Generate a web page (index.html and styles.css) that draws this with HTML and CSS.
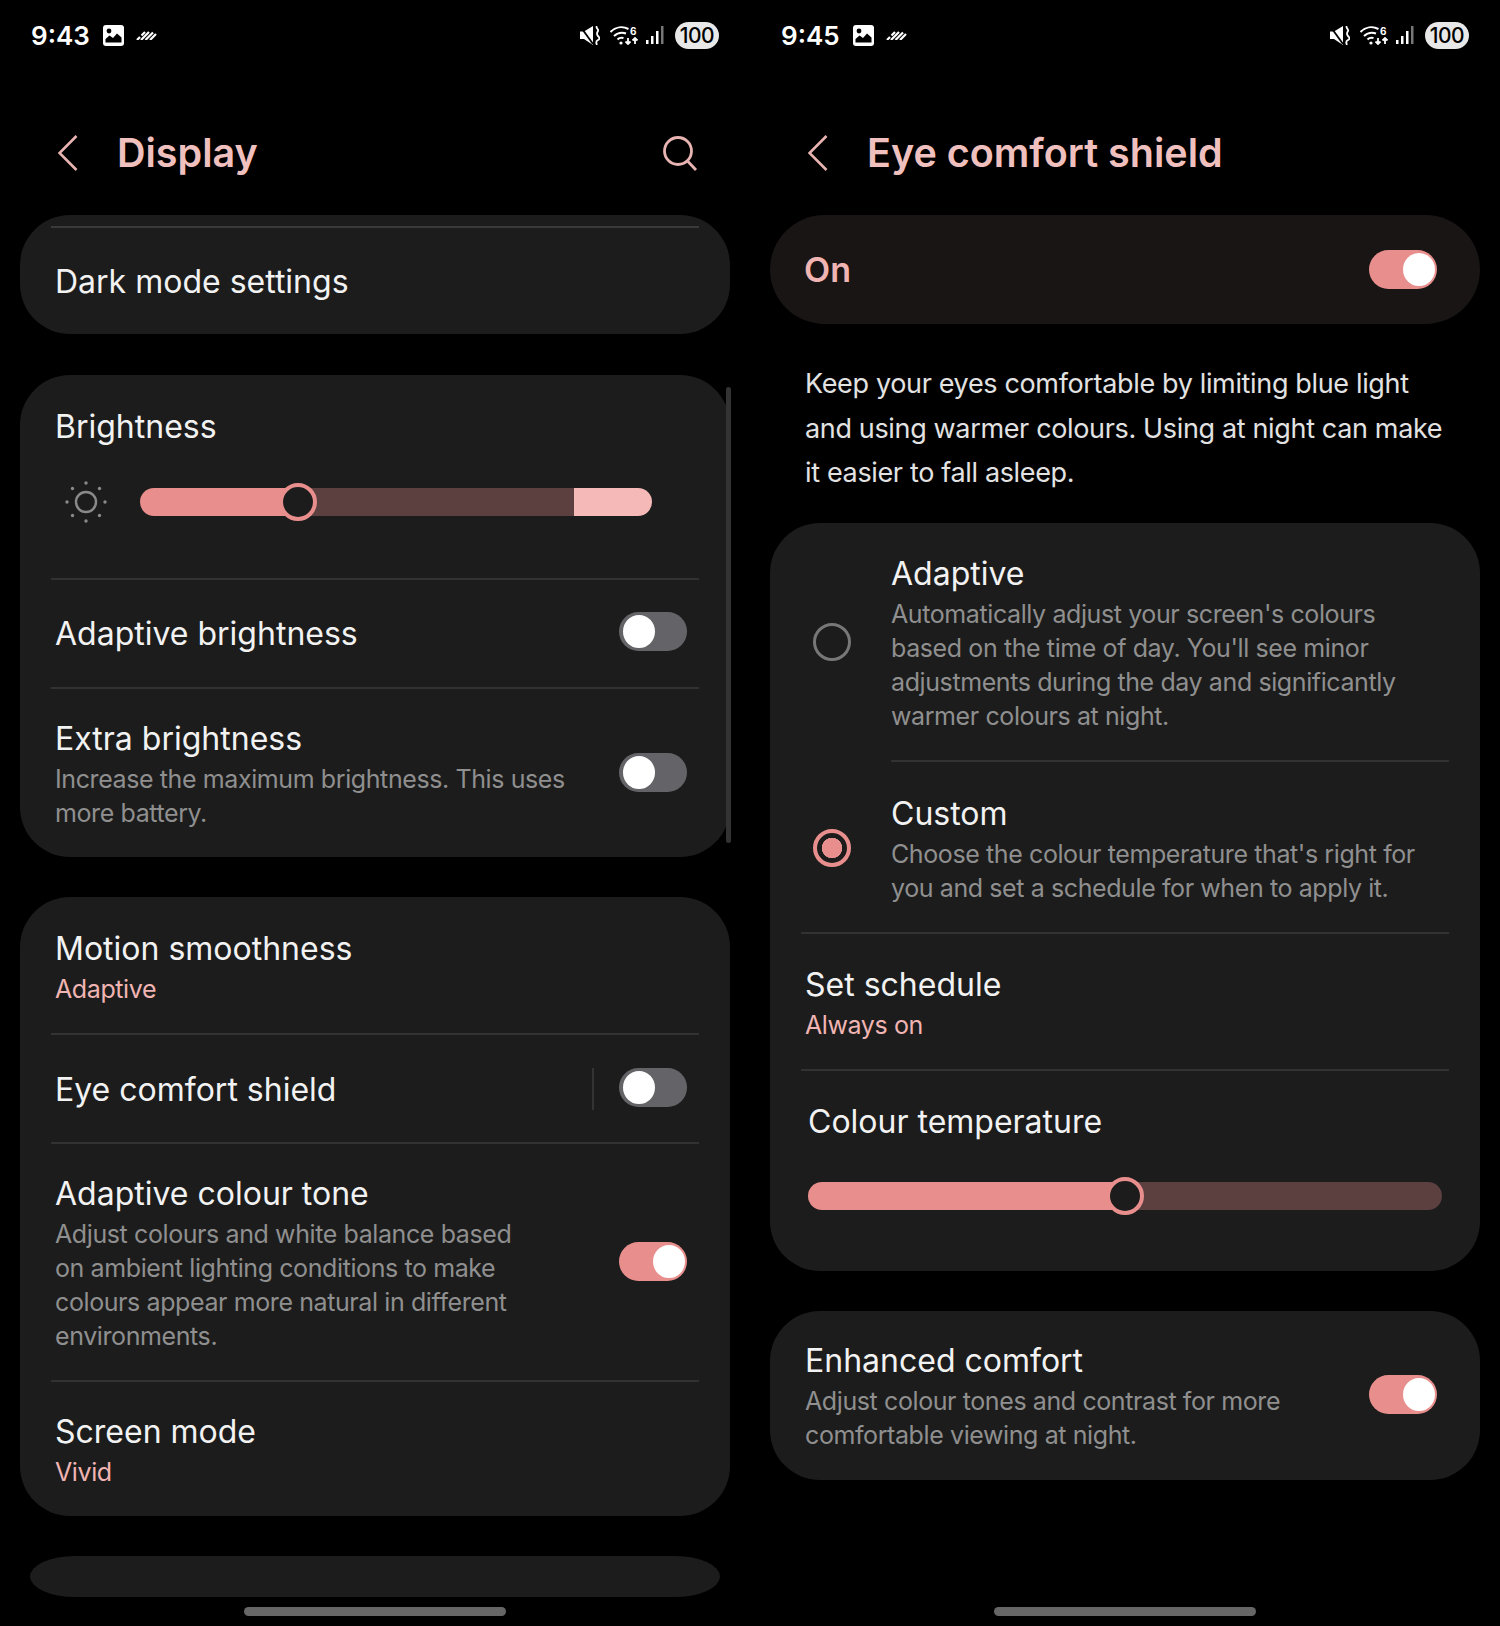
FILE: index.html
```html
<!DOCTYPE html>
<html>
<head>
  <meta charset="utf-8">
  <title>Display and Eye comfort shield</title>
  <link rel="stylesheet" href="styles.css">
</head>
<body>
  <svg class="defs" width="0" height="0">
    <symbol id="i-photo" viewBox="0 0 21 21">
      <rect width="21" height="21" rx="3" fill="#fff"/>
      <circle cx="6" cy="6" r="2.4" fill="#000"/>
      <path d="M2.500 17.500v-3.500l4-3.500 3.500 2.500 4-4.500 4.500 4v5z" fill="#000"/>
    </symbol>
    <symbol id="i-dash" viewBox="0 0 21 10">
      <path d="M1 10 4 7M5.500 5.500 9 2M5 10 13 2M9.500 10 17 2.500M14 10 20 4" stroke="#fff" stroke-width="2.200" fill="none"/>
    </symbol>
    <symbol id="i-mute" viewBox="0 0 20 19">
      <path d="M0 5.500h4l9-5.500v19l-9-6H0z" fill="#fff"/>
      <path d="M0 0 13 18" stroke="#000" stroke-width="1.800"/>
      <path d="M17 0c-2 2 2 3 1 5s-2 3 0 5 2 3 0 4-2 3-1 5" stroke="#fff" stroke-width="1.800" fill="none"/>
    </symbol>
    <symbol id="i-wifi" viewBox="0 0 29 20">
      <g fill="none" stroke="#fff" stroke-width="2">
        <path d="M0.500 7c5-5 12-6 18-3"/>
        <path d="M4 11c3-3 8-4 12-2.500"/>
        <path d="M7.500 14.500c1.500-1.500 4-2 6-1.500"/>
        <path d="M18 13v6M15.500 16.500 18 19l2.500-2.500M25 19v-6M22.500 15.500 25 13l2.500 2.500" stroke-width="1.800"/>
      </g>
      <circle cx="11" cy="18" r="1.600" fill="#fff"/>
    </symbol>
    <symbol id="i-signal" viewBox="0 0 18 18">
      <rect x="0" y="14" width="2.500" height="4" fill="#fff"/>
      <rect x="5" y="10" width="2.500" height="8" fill="#fff"/>
      <rect x="10" y="5" width="2.500" height="13" fill="#fff"/>
      <rect x="15" y="0" width="2.500" height="18" fill="#777"/>
    </symbol>
    <symbol id="i-back" viewBox="0 0 20 36">
      <path d="M18.500 1 1.500 18l17 17" fill="none" stroke="#e8b4b2" stroke-width="2.600"/>
    </symbol>
  </svg>

  <div class="app">
    <section class="screen">
      <div class="status">
        <span class="time">9:43</span>
        <svg class="ic-photo"><use href="#i-photo"/></svg>
        <svg class="ic-dash"><use href="#i-dash"/></svg>
        <span class="status-gap"></span>
        <svg class="ic-mute"><use href="#i-mute"/></svg>
        <svg class="ic-wifi" viewBox="0 0 29 20"><use href="#i-wifi"/><text x="20" y="10" class="wifi-six">6</text></svg>
        <svg class="ic-signal"><use href="#i-signal"/></svg>
        <span class="battery">100</span>
      </div>
      <header class="head">
        <svg class="back"><use href="#i-back"/></svg>
        <h1>Display</h1>
        <svg class="search" viewBox="0 0 34 35">
          <circle cx="15" cy="15" r="13.500" fill="none" stroke="#e8b4b2" stroke-width="2.800"/>
          <path d="M24.500 25 33 34" stroke="#e8b4b2" stroke-width="2.800"/>
        </svg>
      </header>

      <div class="card dark-card">
        <div class="row row-dark"><div class="title">Dark mode settings</div></div>
      </div>

      <div class="card bright-card">
        <div class="slider-block">
          <div class="title">Brightness</div>
          <div class="slider-row">
            <svg class="sun" viewBox="0 0 44 44">
              <circle cx="22" cy="22" r="10" fill="none" stroke="#8a8a8a" stroke-width="2.400"/>
              <g fill="#8a8a8a">
                <circle cx="22" cy="3" r="1.700"/><circle cx="22" cy="41" r="1.700"/>
                <circle cx="3" cy="22" r="1.700"/><circle cx="41" cy="22" r="1.700"/>
                <circle cx="8.500" cy="8.500" r="1.700"/><circle cx="35.500" cy="8.500" r="1.700"/>
                <circle cx="8.500" cy="35.500" r="1.700"/><circle cx="35.500" cy="35.500" r="1.700"/>
              </g>
            </svg>
            <div class="track track-bright">
              <span class="fill" style="width:30.9%"></span>
              <span class="rest"></span>
              <span class="extra"></span>
              <span class="thumb" style="left:30.9%"></span>
            </div>
          </div>
        </div>
        <div class="row row-110">
          <div class="title">Adaptive brightness</div>
          <span class="toggle"></span>
        </div>
        <div class="row row-extra">
          <div class="text">
            <div class="title">Extra brightness</div>
            <div class="sub">Increase the maximum brightness. This uses<br>more battery.</div>
          </div>
          <span class="toggle"></span>
        </div>
      </div>

      <div class="card list-card">
        <div class="row row-value first">
          <div class="text">
            <div class="title">Motion smoothness</div>
            <div class="value">Adaptive</div>
          </div>
        </div>
        <div class="row row-eye">
          <div class="title">Eye comfort shield</div>
          <span class="vbar"></span>
          <span class="toggle"></span>
        </div>
        <div class="row row-tone">
          <div class="text">
            <div class="title">Adaptive colour tone</div>
            <div class="sub">Adjust colours and white balance based<br>on ambient lighting conditions to make<br>colours appear more natural in different<br>environments.</div>
          </div>
          <span class="toggle on"></span>
        </div>
        <div class="row row-value">
          <div class="text">
            <div class="title">Screen mode</div>
            <div class="value">Vivid</div>
          </div>
        </div>
      </div>

      <div class="card peek-card"></div>
      <div class="scrollbar"></div>
      <div class="home"></div>
    </section>

    <section class="screen">
      <div class="status">
        <span class="time">9:45</span>
        <svg class="ic-photo"><use href="#i-photo"/></svg>
        <svg class="ic-dash"><use href="#i-dash"/></svg>
        <span class="status-gap"></span>
        <svg class="ic-mute"><use href="#i-mute"/></svg>
        <svg class="ic-wifi" viewBox="0 0 29 20"><use href="#i-wifi"/><text x="20" y="10" class="wifi-six">6</text></svg>
        <svg class="ic-signal"><use href="#i-signal"/></svg>
        <span class="battery">100</span>
      </div>
      <header class="head">
        <svg class="back"><use href="#i-back"/></svg>
        <h1>Eye comfort shield</h1>
      </header>

      <div class="on-card">
        <span class="on-label">On</span>
        <span class="toggle on"></span>
      </div>

      <p class="intro">Keep your eyes comfortable by limiting blue light<br>and using warmer colours. Using at night can make<br>it easier to fall asleep.</p>

      <div class="card mode-card">
        <div class="option option-adaptive">
          <span class="radio"></span>
          <div class="text option-text">
            <div class="title">Adaptive</div>
            <div class="sub">Automatically adjust your screen's colours<br>based on the time of day. You'll see minor<br>adjustments during the day and significantly<br>warmer colours at night.</div>
          </div>
        </div>
        <div class="option option-custom">
          <span class="radio checked"></span>
          <div class="text option-text">
            <div class="title">Custom</div>
            <div class="sub">Choose the colour temperature that's right for<br>you and set a schedule for when to apply it.</div>
          </div>
        </div>
        <div class="row row-value">
          <div class="text">
            <div class="title">Set schedule</div>
            <div class="value">Always on</div>
          </div>
        </div>
        <div class="temp-block">
          <div class="title">Colour temperature</div>
          <div class="track track-temp">
            <span class="fill" style="width:50%"></span>
            <span class="rest"></span>
            <span class="thumb" style="left:50%"></span>
          </div>
        </div>
      </div>

      <div class="card comfort-card">
        <div class="row row-comfort">
          <div class="text">
            <div class="title">Enhanced comfort</div>
            <div class="sub">Adjust colour tones and contrast for more<br>comfortable viewing at night.</div>
          </div>
          <span class="toggle on"></span>
        </div>
      </div>
      <div class="home"></div>
    </section>
  </div>
</body>
</html>
```

FILE: styles.css
```css
* {
  box-sizing: border-box;
}
body {
  margin: 0;
  background-color: #000;
  font-family: Inter, "Liberation Sans", sans-serif;
  color: #f2f2f2;
}
.defs {
  position: absolute;
}
.wifi-six {
  font-family: Inter, sans-serif;
  font-size: 10px;
  font-weight: 700;
  fill: #fff;
}
.app {
  display: grid;
  grid-template-columns: 750px 750px;
  width: 1500px;
  height: 1626px;
  overflow: hidden;
}
.screen {
  position: relative;
  display: flex;
  flex-direction: column;
  padding: 0 20px;
}

/* status bar */
.status {
  display: flex;
  align-items: center;
  height: 70px;
  padding: 0 11px;
}
.time {
  width: 58px;
  font-size: 26px;
  font-weight: 600;
  color: #fff;
}
.ic-photo {
  width: 21px;
  height: 21px;
  margin-left: 14px;
}
.ic-dash {
  width: 21px;
  height: 10px;
  margin-left: 12px;
}
.status-gap {
  flex: 1;
}
.ic-mute {
  width: 20px;
  height: 19px;
}
.ic-wifi {
  width: 29px;
  height: 20px;
  margin-left: 10px;
}
.ic-signal {
  width: 18px;
  height: 18px;
  margin-left: 7px;
}
.battery {
  width: 44px;
  height: 27px;
  margin-left: 11px;
  border-radius: 14px;
  background-color: #e8e8e8;
  color: #000;
  font-size: 21px;
  font-weight: 500;
  letter-spacing: -0.500px;
  line-height: 27px;
  text-align: center;
}

/* title bar */
.head {
  display: flex;
  align-items: center;
  height: 145px;
  padding: 21px 33px 0 38px;
}
.back {
  width: 20px;
  height: 36px;
  margin-right: 39px;
}
.head h1 {
  flex: 1;
  margin: 0;
  font-size: 39.500px;
  font-weight: 600;
  color: #f0c0be;
}
.search {
  width: 34px;
  height: 35px;
}

/* cards */
.card {
  padding: 0 31px;
  border-radius: 50px;
  background-color: #1c1c1c;
}
.dark-card {
  height: 119px;
  padding-top: 11px;
}
.row {
  display: flex;
  align-items: center;
  justify-content: space-between;
  padding: 0 12px 0 4px;
  border-top: 2px solid #323232;
}
.row .toggle {
  margin-bottom: 4px;
}
.row-dark {
  height: 108px;
  padding-top: 2px;
  border-top-color: #3a3a3a;
}
.title {
  font-size: 32px;
  line-height: 40px;
  color: #f2f2f2;
  white-space: nowrap;
}
.sub {
  margin-top: 3px;
  font-size: 25px;
  letter-spacing: -0.400px;
  line-height: 34px;
  color: #8f8f8f;
  white-space: nowrap;
}
.value {
  margin-top: 3px;
  font-size: 25px;
  letter-spacing: -0.400px;
  line-height: 34px;
  color: #f0b4b2;
}

.bright-card {
  height: 482px;
  margin-top: 41px;
}
.slider-block {
  height: 203px;
  padding: 32px 0 0 4px;
}
.slider-row {
  display: flex;
  align-items: center;
  margin-top: 33px;
}
.sun {
  width: 44px;
  height: 44px;
  margin-left: 9px;
  margin-right: 32px;
}
.track {
  position: relative;
  display: flex;
  height: 28px;
  border-radius: 14px;
}
.track-bright {
  width: 512px;
}
.fill {
  border-radius: 14px 0 0 14px;
  background-color: #e88f8d;
}
.rest {
  flex: 1;
  background-color: #5c3f3f;
}
.extra {
  width: 78px;
  border-radius: 0 14px 14px 0;
  background-color: #f5bab8;
}
.track-temp .rest {
  border-radius: 0 14px 14px 0;
}
.thumb {
  position: absolute;
  top: -5px;
  width: 38px;
  height: 38px;
  margin-left: -19px;
  border: 4px solid #e88f8d;
  border-radius: 50%;
  background-color: #1c1c1c;
}
.row-110 {
  height: 109px;
}
.row-extra {
  height: 170px;
  padding-top: 29px;
  padding-bottom: 27px;
}
.toggle {
  position: relative;
  flex: none;
  width: 68px;
  height: 39px;
  border-radius: 20px;
  background-color: #646468;
}
.toggle::after {
  content: "";
  position: absolute;
  top: 3px;
  left: 4px;
  width: 32px;
  height: 33px;
  border-radius: 50%;
  background-color: #fff;
}
.toggle.on {
  background-color: #e88f8d;
}
.toggle.on::after {
  left: 34px;
}
.vbar {
  width: 2px;
  height: 42px;
  margin-left: auto;
  margin-right: 25px;
  margin-bottom: 2px;
  background-color: #333;
}

.list-card {
  height: 619px;
  margin-top: 40px;
}
.row-value {
  height: 137px;
  padding-top: 4px;
}
.row-value.first {
  height: 136px;
  border-top: none;
}
.row-eye {
  height: 109px;
  padding-top: 2px;
}
.row-tone {
  height: 238px;
  padding-top: 2px;
}
.list-card .row-value:last-child {
  height: 135px;
}
.peek-card {
  height: 41px;
  margin: 40px 10px 0;
  border-radius: 45px / 50%;
}
.scrollbar {
  position: absolute;
  top: 387px;
  left: 726px;
  width: 5px;
  height: 456px;
  border-radius: 3px;
  background-color: #333;
}
.home {
  position: absolute;
  top: 1607px;
  left: 244px;
  width: 262px;
  height: 9px;
  border-radius: 5px;
  background-color: #666;
}

/* eye comfort shield */
.on-card {
  display: flex;
  align-items: center;
  justify-content: space-between;
  height: 109px;
  padding: 0 43px 0 34px;
  border-radius: 55px;
  background-color: #1a1515;
}
.on-label {
  font-size: 34px;
  font-weight: 600;
  color: #f0b4b2;
}
.intro {
  margin: 38px 0 27px 35px;
  font-size: 27px;
  letter-spacing: -0.350px;
  line-height: 44.500px;
  color: #e2e2e2;
  white-space: nowrap;
}
.mode-card {
  height: 748px;
}
.option {
  display: flex;
  align-items: center;
}
.radio {
  flex: none;
  width: 38px;
  height: 38px;
  margin: 0 40px 4px 12px;
  border: 3px solid #777;
  border-radius: 50%;
}
.radio.checked {
  margin-bottom: 0;
  margin-top: 4px;
  border: 4px solid #e88f8d;
  background: radial-gradient(circle, #e88f8d 10px, #1c1c1c 10.500px);
}
.option-adaptive {
  height: 237px;
  padding-top: 5px;
}
.option-custom {
  height: 172px;
}
.option-text {
  flex: 1;
  align-self: stretch;
  display: flex;
  flex-direction: column;
  justify-content: center;
}
.option-custom .option-text {
  padding-top: 6px;
  border-top: 2px solid #323232;
}
.temp-block {
  height: 201px;
  padding: 31px 7px 0;
  border-top: 2px solid #323232;
}
.track-temp {
  width: 634px;
  margin-top: 40px;
}
.comfort-card {
  height: 169px;
  margin-top: 40px;
}
.row-comfort {
  height: 169px;
  padding-top: 2px;
  border-top: none;
}
```
